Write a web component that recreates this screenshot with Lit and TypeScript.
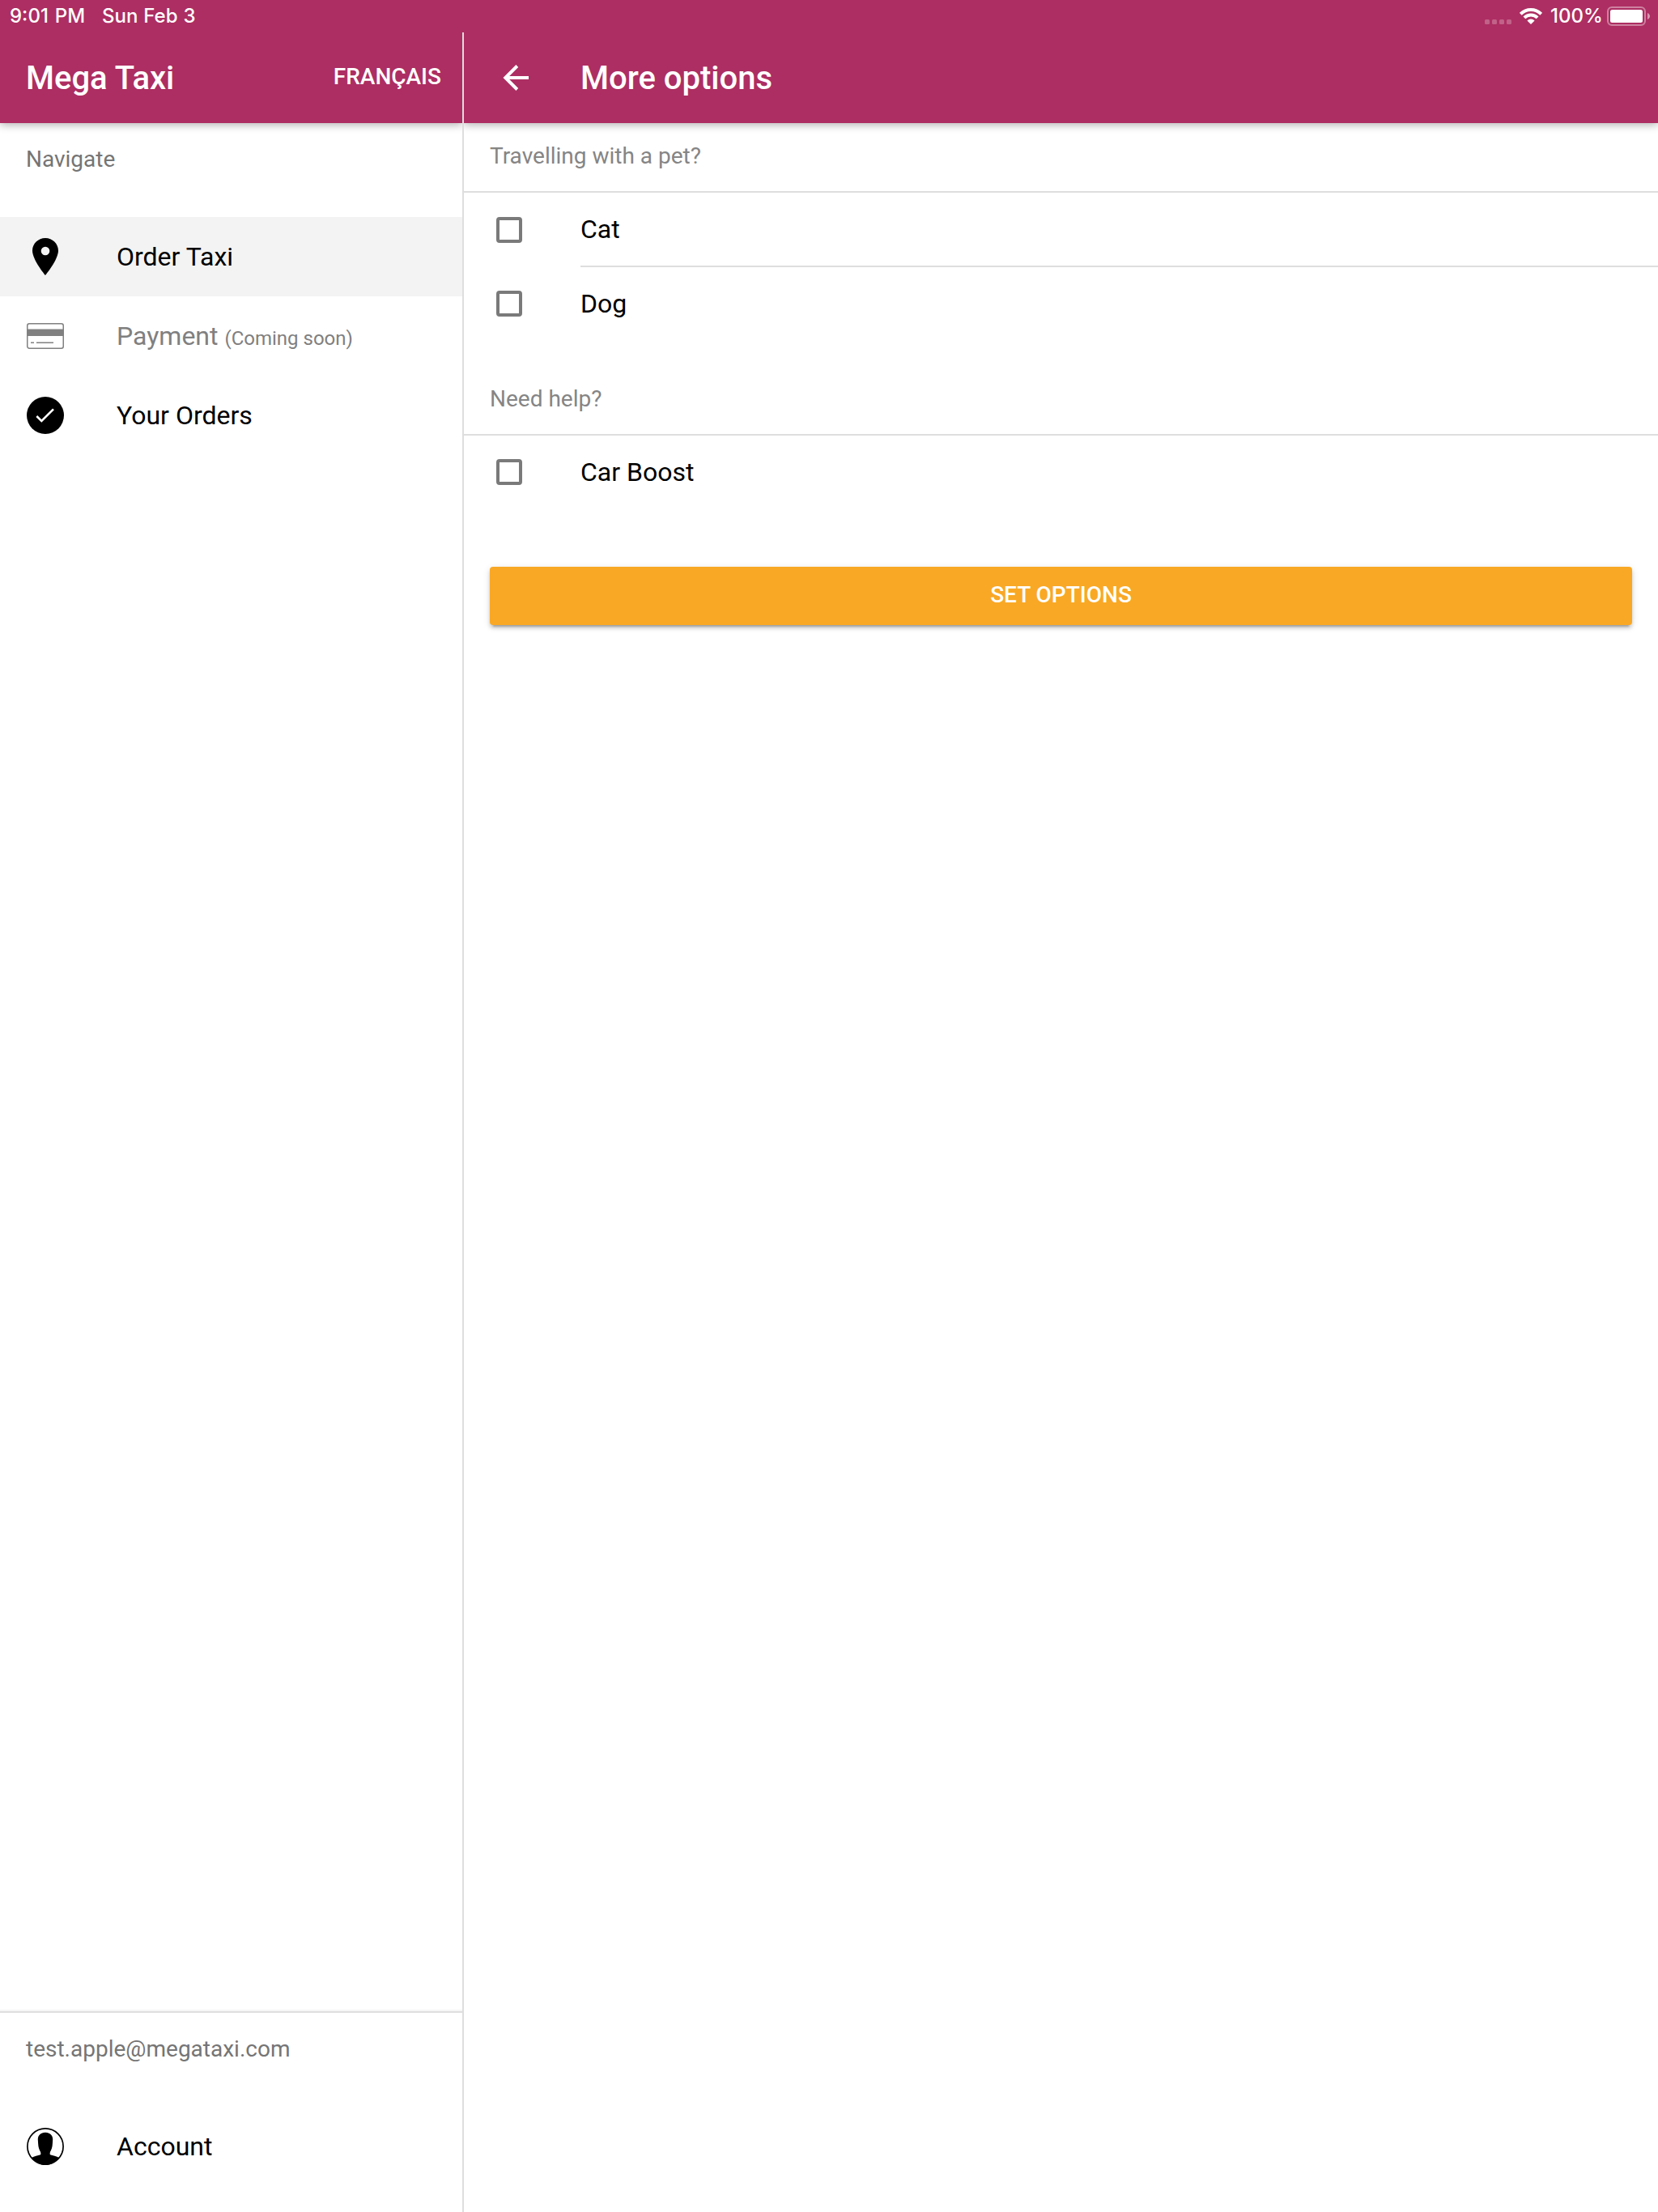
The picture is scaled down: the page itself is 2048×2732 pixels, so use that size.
import { LitElement, html, css, svg } from "lit";
import { customElement } from "lit/decorators.js";

const icons: Record<string, unknown> = {
  pin: svg`<path fill-rule="evenodd" d="M24 1C15.2 1 8 7.900 8 16.500 8 28 24 47 24 47s16-19 16-30.500C40 7.900 32.800 1 24 1Zm0 21.300a5.300 5.300 0 1 1 0-10.600 5.300 5.300 0 0 1 0 10.600Z"/>`,
  card: svg`<rect x="1.750" y="8.750" width="44.500" height="30.500" rx="2.500" fill="none" stroke="currentColor" stroke-width="1.500"/><path d="M1.500 15.500h45V24h-45zM6 31.500h4V33H6zM13 31.500h21V33H13z"/>`,
  check: svg`<circle cx="24" cy="24" r="23"/><path d="M13.300 25l6 6L34 16.300" fill="none" stroke="#fff" stroke-width="2.600"/>`,
  account: svg`<circle cx="24" cy="24" r="22.100" fill="none" stroke="currentColor" stroke-width="1.700"/><path d="M24 6.800c-5.800 0-9.200 3.600-9.200 8.500 0 1.500.300 3.500.300 5 .200 5 1.500 8 2.900 10.500.500 1.500.500 3.200 0 3.500-3 1-8 2-11 3.600C10.500 43.500 17.500 47 24 47s13.500-3.500 17-9.100c-3-1.600-8-2.600-11-3.600-.500-.300-.500-2 0-3.500 1.400-2.500 2.700-5.500 2.900-10.500 0-1.500.300-3.500.300-5 0-4.900-3.400-8.500-9.200-8.500Z"/>`,
};

const icon = (name: string) =>
  html`<svg class="icon" viewBox="0 0 48 48" fill="currentColor">${icons[name]}</svg>`;

@customElement("app-root")
export class AppRoot extends LitElement {
  static styles = css`
    :host {
      display: flex;
      flex-direction: column;
      height: 2732px;
      background: #fff;
      color: #000;
      font-family: Roboto, sans-serif;
      font-size: 32px;
    }
    .status {
      display: flex;
      align-items: center;
      flex: none;
      height: 40px;
      box-sizing: border-box;
      padding: 0 10px 0 12px;
      background: #ad2e62;
      color: #fff;
      font: 500 24px/40px Inter, sans-serif;
      white-space: pre;
    }
    .clock { margin-right: 21px; width: 93px; word-spacing: 1.5px; }
    .date { word-spacing: 0.5px; }
    .spacer { flex: 1; }
    .signal { width: 33px; height: 6px; margin: 14px 10px 0 0; }
    .wifi { width: 28px; height: 20px; margin-right: 10px; }
    .percent { width: 63px; margin-right: 7px; }
    .battery { width: 53px; height: 24px; }
    .panes { display: flex; flex: 1; min-height: 0; }
    .side {
      display: flex;
      flex-direction: column;
      width: 571px;
      flex: none;
      border-right: 2px solid #dedede;
    }
    .main { flex: 1; display: flex; flex-direction: column; }
    .bar {
      display: flex;
      align-items: center;
      flex: none;
      height: 112px;
      box-sizing: border-box;
      padding: 0 26px 0 32px;
      background: #ad2e62;
      color: #fff;
      box-shadow: 0 2px 10px rgba(0, 0, 0, 0.32);
      clip-path: inset(0 0 -20px 0);
    }
    .main .bar { padding-left: 42px; }
    .title { padding-top: 2px; font-size: 40px; font-weight: 500; line-height: 48px; }
    .lang { margin-left: auto; padding-bottom: 3px; font-size: 28px; line-height: 33px; font-weight: 500; }
    .back { width: 44px; height: 44px; margin-right: 58px; }
    .label {
      flex: none;
      height: 87px;
      padding: 29px 0 0 32px;
      font-size: 28px;
      line-height: 32px;
      color: #757575;
    }
    .row {
      display: flex;
      align-items: center;
      flex: none;
      height: 98px;
      padding-left: 32px;
    }
    .row.active { background: #f3f3f3; }
    .row.off { color: #808080; }
    .icon { width: 48px; height: 48px; margin-right: 64px; }
    .note { font-size: 24px; }
    .foot { margin-top: auto; border-top: 2px solid #dedede; box-shadow: 0 -2px #f6f6f6; }
    .account { padding-bottom: 32px; }
    .head {
      flex: none;
      height: 86px;
      box-sizing: border-box;
      padding: 25px 0 0 32px;
      border-bottom: 2px solid #dedede;
      color: #858585;
      font-size: 28px;
      line-height: 32px;
    }
    .help { margin-top: 32px; }
    .option { display: flex; height: 90px; }
    .option.lined { height: 92px; }
    .box {
      width: 24px;
      height: 24px;
      margin: 29px 72px 0 40px;
      border: 4px solid #7a7a7a;
      border-radius: 4px;
    }
    .lined .box { margin-top: 30px; }
    .text { flex: 1; line-height: 90px; }
    .lined .text { border-bottom: 2px solid #dedede; }
    .set {
      flex: none;
      height: 72px;
      margin: 72px 32px 0;
      border: 0;
      border-radius: 4px;
      background: #f9a825;
      color: #fff;
      font: 500 28px/69px Roboto, sans-serif;
      padding: 0 0 3px;
      box-shadow: 0 4px 4px rgba(0, 0, 0, 0.14), 0 6px 2px -4px rgba(0, 0, 0, 0.2), 0 2px 10px rgba(0, 0, 0, 0.12);
    }
  `;

  private option(text: string, lined = false) {
    return html`<div class="option ${lined ? "lined" : ""}"><span class="box"></span><span class="text">${text}</span></div>`;
  }

  render() {
    return html`
      <div class="status">
        <span class="clock">9:01 PM</span><span class="date">Sun Feb 3</span><span class="spacer"></span>
        <svg class="signal" viewBox="0 0 33 6" fill="#fff" fill-opacity=".25">
          <rect width="6" height="6" rx="1.500"/><rect x="9" width="6" height="6" rx="1.500"/><rect x="18" width="6" height="6" rx="1.500"/><rect x="27" width="6" height="6" rx="1.500"/>
        </svg>
        <svg class="wifi" viewBox="0 0 28 20" fill="none" stroke="#fff" stroke-width="4">
          <path d="M1.300 7.300a17.950 17.950 0 0 1 25.400 0"/><path d="M5.900 11.900a11.450 11.450 0 0 1 16.200 0"/><path d="M14 20l-4.600-4.600a6.500 6.500 0 0 1 9.200 0z" fill="#fff" stroke="none"/>
        </svg>
        <span class="percent">100%</span>
        <svg class="battery" viewBox="0 0 53 24">
          <rect x="1" y="1" width="46" height="22" rx="5" fill="none" stroke="#fff" stroke-opacity=".4" stroke-width="2"/>
          <rect x="4" y="4" width="40" height="16" rx="2.500" fill="#fff"/>
          <path d="M50 8c4 1.500 4 6.500 0 8z" fill="#fff" fill-opacity=".5"/>
        </svg>
      </div>
      <div class="panes">
        <div class="side">
          <div class="bar"><span class="title">Mega Taxi</span><span class="lang">FRANÇAIS</span></div>
          <div class="label">Navigate</div>
          <div class="row active">${icon("pin")}<span>Order Taxi</span></div>
          <div class="row off">${icon("card")}<span>Payment <span class="note">(Coming soon)</span></span></div>
          <div class="row">${icon("check")}<span>Your Orders</span></div>
          <div class="foot">
            <div class="label">test.apple@megataxi.com</div>
            <div class="row account">${icon("account")}<span>Account</span></div>
          </div>
        </div>
        <div class="main">
          <div class="bar">
            <svg class="back" viewBox="0 0 44 44" fill="none" stroke="#fff" stroke-width="4"><path d="M38 22H9M23.800 7.500L9.300 22l14.500 14.500"/></svg>
            <span class="title">More options</span>
          </div>
          <div class="head">Travelling with a pet?</div>
          ${this.option("Cat", true)}${this.option("Dog")}
          <div class="head help">Need help?</div>
          ${this.option("Car Boost")}
          <button class="set">SET OPTIONS</button>
        </div>
      </div>
    `;
  }
}
